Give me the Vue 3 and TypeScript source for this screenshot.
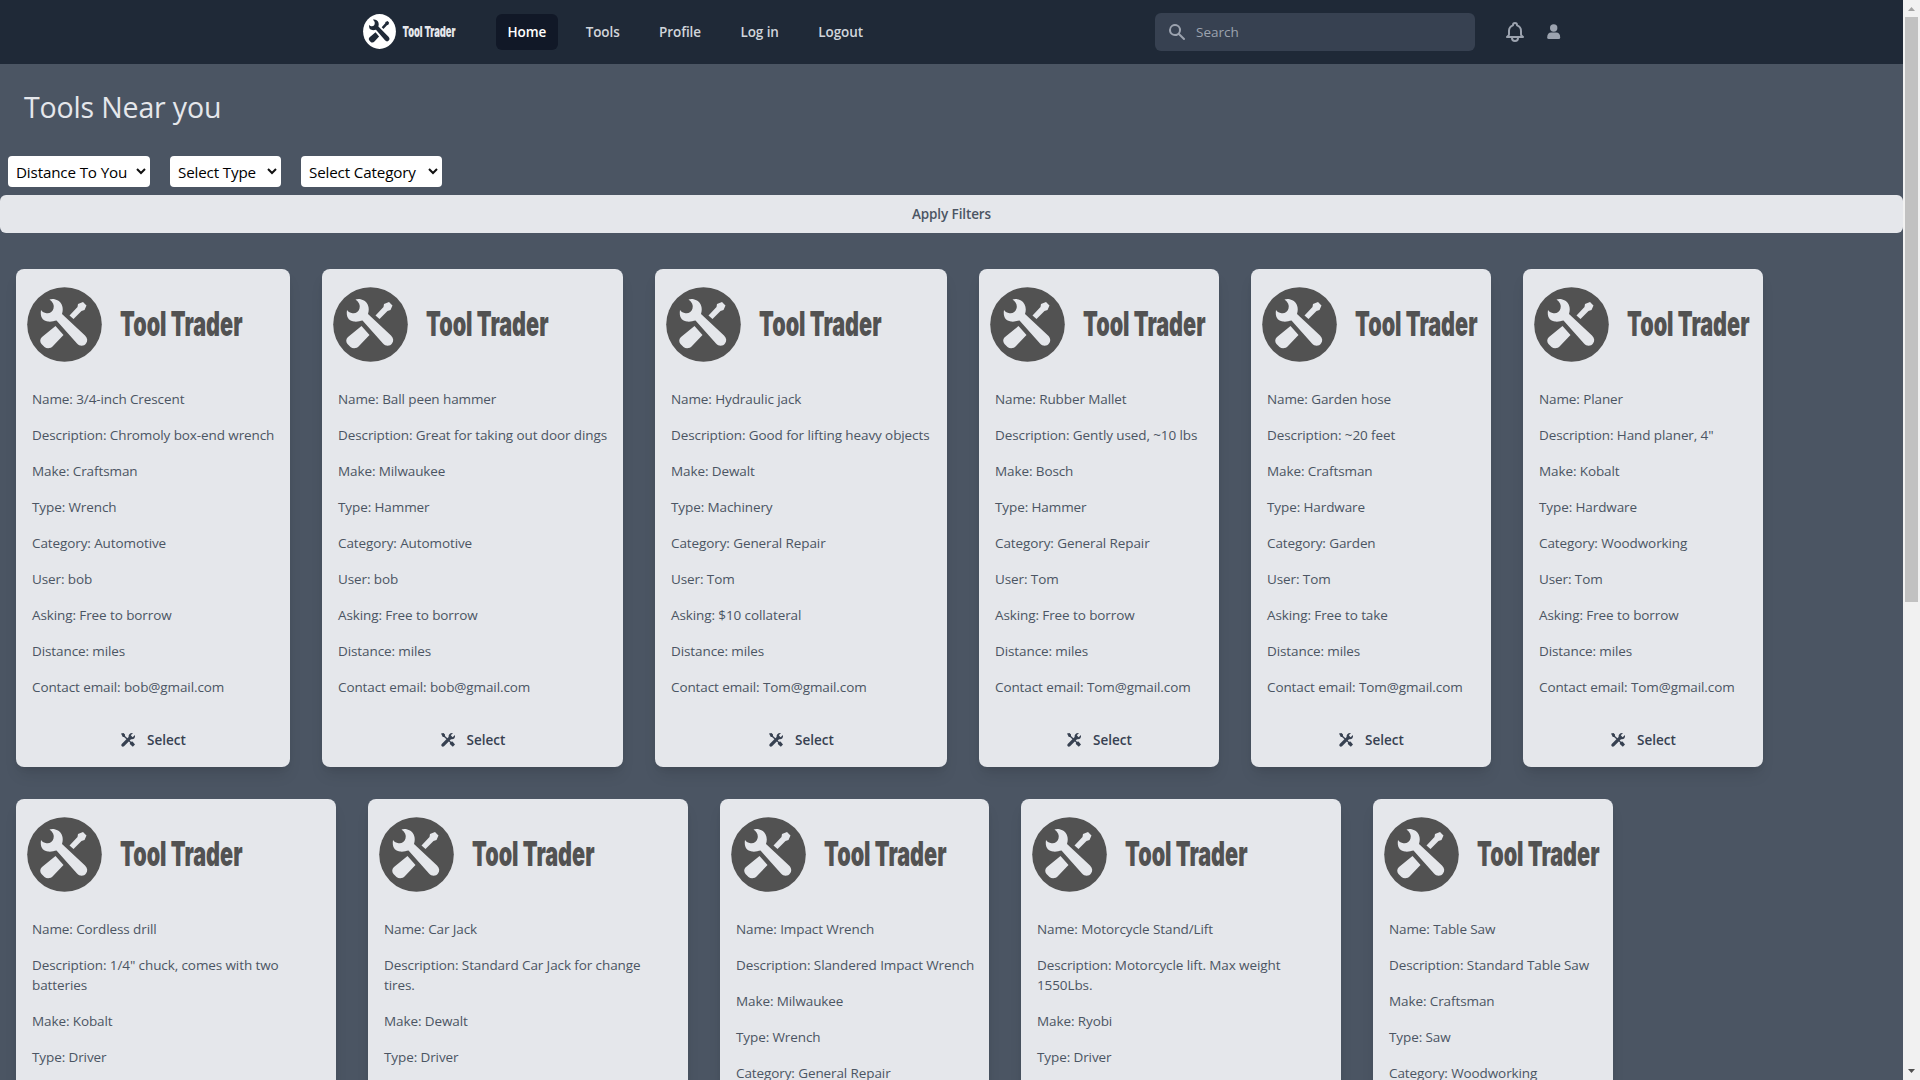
<script setup lang="ts">
interface Tool {
  width: number
  name: string
  description: string
  make: string
  type: string
  category: string
  user: string
  asking: string
}

const links: string[] = ['Home', 'Tools', 'Profile', 'Log in', 'Logout']

const filters: { label: string; width: number }[] = [
  { label: 'Distance To You', width: 142 },
  { label: 'Select Type', width: 111 },
  { label: 'Select Category', width: 141 },
]

const rows: Tool[][] = [
  [
    { width: 274, name: '3/4-inch Crescent', description: 'Chromoly box-end wrench', make: 'Craftsman', type: 'Wrench', category: 'Automotive', user: 'bob', asking: 'Free to borrow' },
    { width: 301, name: 'Ball peen hammer', description: 'Great for taking out door dings', make: 'Milwaukee', type: 'Hammer', category: 'Automotive', user: 'bob', asking: 'Free to borrow' },
    { width: 292, name: 'Hydraulic jack', description: 'Good for lifting heavy objects', make: 'Dewalt', type: 'Machinery', category: 'General Repair', user: 'Tom', asking: '$10 collateral' },
    { width: 240, name: 'Rubber Mallet', description: 'Gently used, ~10 lbs', make: 'Bosch', type: 'Hammer', category: 'General Repair', user: 'Tom', asking: 'Free to borrow' },
    { width: 240, name: 'Garden hose', description: '~20 feet', make: 'Craftsman', type: 'Hardware', category: 'Garden', user: 'Tom', asking: 'Free to take' },
    { width: 240, name: 'Planer', description: 'Hand planer, 4"', make: 'Kobalt', type: 'Hardware', category: 'Woodworking', user: 'Tom', asking: 'Free to borrow' },
  ],
  [
    { width: 320, name: 'Cordless drill', description: '1/4" chuck, comes with two\nbatteries', make: 'Kobalt', type: 'Driver', category: 'General Repair', user: 'Tom', asking: 'Free to borrow' },
    { width: 320, name: 'Car Jack', description: 'Standard Car Jack for change\ntires.', make: 'Dewalt', type: 'Driver', category: 'Automotive', user: 'Tom', asking: 'Free to borrow' },
    { width: 269, name: 'Impact Wrench', description: 'Slandered Impact Wrench', make: 'Milwaukee', type: 'Wrench', category: 'General Repair', user: 'Tom', asking: 'Free to borrow' },
    { width: 320, name: 'Motorcycle Stand/Lift', description: 'Motorcycle lift. Max weight\n1550Lbs.', make: 'Ryobi', type: 'Driver', category: 'Automotive', user: 'Tom', asking: 'Free to borrow' },
    { width: 240, name: 'Table Saw', description: 'Standard Table Saw', make: 'Craftsman', type: 'Saw', category: 'Woodworking', user: 'Tom', asking: 'Free to borrow' },
  ],
]

function details(t: Tool): string[] {
  return [
    `Name: ${t.name}`,
    `Description: ${t.description}`,
    `Make: ${t.make}`,
    `Type: ${t.type}`,
    `Category: ${t.category}`,
    `User: ${t.user}`,
    `Asking: ${t.asking}`,
    'Distance: miles',
    `Contact email: ${t.user}@gmail.com`,
  ]
}
</script>

<template>
  <div class="window">
    <svg class="defs" width="0" height="0">
      <symbol id="mark" viewBox="0 0 75 75">
        <circle cx="37.5" cy="37.5" r="37.3" fill="currentColor" />
        <g class="tool">
          <path d="M14 23 C13 29 15 34 21 34.500 C24 35 27 34 29.500 33.500 L50 56.500 C52.500 59.500 57 59.500 59 56.500 C61 54 60.500 51 58 48.500 L35 27 C37 21 35 16 31 13.500 C28.500 12 25 11.500 22.500 12.500 C26 15 27.500 18 26.500 21.500 C25.500 25.500 22 27 18.500 26 C16.500 25.500 15 24.500 14 23 Z" />
          <path d="M28.500 39 L36.500 48 L26 59 C24 61.500 20 62 17.500 60 L14.500 57 C12.500 54.500 13 52 15 50 Z" />
          <path d="M42.500 28.500 L50.500 20 L51 17 L56 15 L59.500 18.500 L57.500 23 L54.500 24 L46.500 32 Z" />
        </g>
      </symbol>
    </svg>

    <div class="page">
      <nav class="nav">
        <div class="nav-inner">
          <div class="brand">
            <svg class="brand-mark" viewBox="0 0 75 75" preserveAspectRatio="none"><use href="#mark" /></svg>
            <svg class="brand-text" width="56" height="28">
              <text x="0.5" y="19.500" textLength="53" lengthAdjust="spacingAndGlyphs">Tool Trader</text>
            </svg>
          </div>
          <div class="links">
            <a v-for="(link, i) in links" :key="link" class="link" :class="{ active: i === 0 }">{{ link }}</a>
          </div>
          <div class="search">
            <svg width="20" height="20" viewBox="0 0 20 20" fill="currentColor">
              <path fill-rule="evenodd" clip-rule="evenodd" d="M8 4a4 4 0 100 8 4 4 0 000-8zM2 8a6 6 0 1110.890 3.476l4.817 4.817a1 1 0 01-1.414 1.414l-4.816-4.816A6 6 0 012 8z" />
            </svg>
            <span>Search</span>
          </div>
          <svg class="bell" width="24" height="24" viewBox="0 0 24 24" fill="none" stroke="currentColor" stroke-width="2" stroke-linecap="round" stroke-linejoin="round">
            <path d="M15 17h5l-1.405-1.405A2.032 2.032 0 0118 14.158V11a6.002 6.002 0 00-4-5.659V5a2 2 0 10-4 0v.341C7.670 6.165 6 8.388 6 11v3.159c0 .538-.214 1.055-.595 1.436L4 17h5m6 0v1a3 3 0 11-6 0v-1m6 0H9" />
          </svg>
          <svg class="user" width="14" height="16" viewBox="0 0 14 16" fill="currentColor">
            <circle cx="6.700" cy="4" r="3.700" />
            <path d="M.2 13.500 C.2 10 1.700 8.500 4.200 8.500 H9.200 C11.700 8.500 13.200 10 13.200 13.500 Q13.200 15 11.700 15 H1.700 Q.2 15 .2 13.500Z" />
          </svg>
        </div>
      </nav>

      <h1 class="title">Tools Near you</h1>

      <div class="filters">
        <div v-for="f in filters" :key="f.label" class="select" :style="{ width: f.width + 'px' }">
          <span>{{ f.label }}</span>
          <svg width="10" height="7" viewBox="0 0 10 7"><path d="M1 1 L5 5 L9 1" fill="none" stroke="#111" stroke-width="2" /></svg>
        </div>
      </div>

      <button class="apply">Apply Filters</button>

      <main class="cards">
        <div v-for="(row, r) in rows" :key="r" class="row">
          <article v-for="tool in row" :key="tool.name" class="card" :style="{ width: tool.width + 'px' }">
            <div class="logo">
              <svg class="logo-mark" viewBox="0 0 75 75"><use href="#mark" /></svg>
              <svg class="logo-text" width="124" height="56">
                <text x="0" y="40" textLength="122.5" lengthAdjust="spacingAndGlyphs">Tool Trader</text>
              </svg>
            </div>
            <div class="details">
              <p v-for="line in details(tool)" :key="line">{{ line }}</p>
            </div>
            <div class="pick">
              <svg width="16" height="16" viewBox="0 0 16 16">
                <path d="M1 1.500 L3.500 1 L5 2.500 L5 4 L11 9.800 L12.500 9.500 L15 12.500 L12.800 14.800 L9.800 12 L10 10.600 L4 5 L2.800 5 Z" fill="#374151" />
                <path d="M13 1 L10.800 3.200 L12.600 5.200 L15 3 C15.500 6 13.500 7.800 11 7.200 L4 14.300 C2.500 15.500 .3 13.500 1.700 12 L8.600 5 C8.200 2.500 10.300 .5 13 1Z" fill="#374151" />
              </svg>
              <span>Select</span>
            </div>
          </article>
        </div>
      </main>
    </div>

    <div class="scrollbar">
      <svg width="7" height="4" viewBox="0 0 7 4"><path d="M0 4 L3.500 0 L7 4Z" fill="#a3a3a3" /></svg>
      <div class="thumb"></div>
      <svg class="down" width="7" height="4" viewBox="0 0 7 4"><path d="M0 0 L3.500 4 L7 0Z" fill="#505050" /></svg>
    </div>
  </div>
</template>

<style>
body {
  margin: 0;
  overflow: hidden;
}
</style>

<style scoped>
.window {
  display: flex;
  width: 1920px;
  height: 1080px;
  overflow: hidden;
  font-family: 'Open Sans', 'Noto Sans', sans-serif;
}
.defs {
  position: absolute;
}
.tool {
  fill: var(--tool);
}
.page {
  width: 1903px;
  height: 1080px;
  overflow: hidden;
  background: #4b5563;
}
.nav {
  height: 64px;
  background: #1f2937;
}
.nav-inner {
  display: flex;
  align-items: center;
  height: 64px;
  padding-left: 363px;
}
.brand {
  display: flex;
  align-items: center;
  width: 133px;
}
.brand-mark {
  --tool: #1f2937;
  width: 33px;
  height: 35px;
  margin: 0 6px 2px 0;
  color: #fff;
}
.brand-text {
  margin-bottom: 2px;
  overflow: visible;
}
.brand-text text {
  font: 900 15px Inter, sans-serif;
  fill: #e5e7eb;
}
.links {
  display: flex;
  gap: 16px;
  width: 659px;
}
.link {
  box-sizing: border-box;
  height: 36px;
  padding: 8px 12px 8px 11.500px;
  border-radius: 6px;
  color: #d1d5db;
  font-size: 13.500px;
  font-weight: 600;
  line-height: 20px;
  letter-spacing: -0.100px;
}
.link.active {
  background: #111827;
  color: #fff;
}
.search {
  display: flex;
  align-items: center;
  gap: 9px;
  box-sizing: border-box;
  width: 320px;
  height: 38px;
  padding-left: 12px;
  border-radius: 6px;
  background: #374151;
  color: #9ca3af;
  font-size: 13.500px;
}
.bell {
  margin-left: 28px;
  color: #9ca3af;
}
.user {
  margin-left: 19.500px;
  color: #9ca3af;
}
.title {
  height: 36px;
  margin: 25px 0 0 24px;
  color: #e5e7eb;
  font-size: 28.500px;
  font-weight: 400;
  line-height: 36px;
  letter-spacing: -0.150px;
}
.filters {
  display: flex;
  gap: 20px;
  height: 31px;
  margin: 31px 0 0 8px;
}
.select {
  display: flex;
  align-items: center;
  justify-content: space-between;
  box-sizing: border-box;
  padding: 0 4px 0 8px;
  border-radius: 4px;
  background: #fff;
  color: #000;
  font-size: 15.200px;
  letter-spacing: -0.150px;
  white-space: nowrap;
}
.apply {
  display: block;
  width: 100%;
  height: 38px;
  margin-top: 8px;
  padding: 0;
  border: 0;
  border-radius: 6px;
  background: #e5e7eb;
  color: #4b5563;
  font: 600 13.500px 'Open Sans', sans-serif;
  letter-spacing: -0.100px;
}
.cards {
  display: flex;
  flex-direction: column;
  gap: 32px;
  padding: 36px 0 0 16px;
}
.row {
  display: flex;
  gap: 32px;
}
.card {
  flex: none;
  display: flex;
  flex-direction: column;
  box-sizing: border-box;
  height: 498px;
  border-radius: 8px;
  background: #e5e7eb;
  box-shadow: 0 10px 15px -3px rgba(0, 0, 0, 0.100), 0 4px 6px -2px rgba(0, 0, 0, 0.050);
}
.row:last-child .card {
  height: 518px;
}
.logo {
  display: flex;
  align-items: flex-start;
  box-sizing: border-box;
  height: 120px;
  padding: 17.500px 0 0 11px;
}
.logo-mark {
  --tool: #e5e7eb;
  width: 75px;
  height: 75px;
  margin-right: 17.500px;
  color: #525252;
}
.logo-text {
  margin-top: 9.500px;
  overflow: visible;
}
.logo-text text {
  font: 900 34px Inter, sans-serif;
  fill: #525252;
}
.details {
  padding-left: 16px;
}
.details p {
  margin: 0 0 16px;
  color: #4b5563;
  font-size: 13.500px;
  line-height: 20px;
  letter-spacing: -0.100px;
  white-space: pre;
}
.pick {
  display: flex;
  align-items: center;
  justify-content: center;
  gap: 11px;
  height: 38px;
  margin-top: 8px;
  color: #374151;
  font-size: 13.500px;
  font-weight: 600;
}
.scrollbar {
  display: flex;
  flex-direction: column;
  align-items: center;
  box-sizing: border-box;
  width: 17px;
  height: 1080px;
  padding: 7px 0;
  background: #f1f1f1;
}
.thumb {
  width: 13px;
  height: 585px;
  margin-top: 6px;
  background: #c1c1c1;
}
.down {
  margin-top: auto;
}
</style>
